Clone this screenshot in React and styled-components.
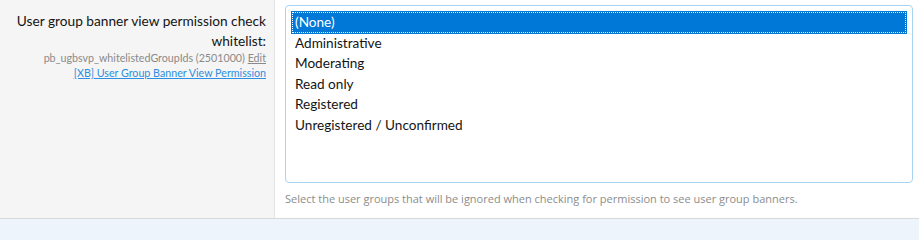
import React from 'react';
import styled, { createGlobalStyle } from 'styled-components';

const GlobalStyle = createGlobalStyle`
  html, body {
    margin: 0;
    padding: 0;
    background: #edf4fb;
    font-family: Lato, "Open Sans", sans-serif;
  }
`;

const FormRow = styled.div`
  display: flex;
  height: 219px;
  box-sizing: border-box;
  border-bottom: 1px solid #d8d8d8;
  background: #fff;
`;

const LabelCol = styled.div`
  width: 275px;
  flex: none;
  box-sizing: border-box;
  background: #f5f5f5;
  border-right: 1px solid #e3e3e3;
  padding: 11px 8px 0 6px;
  text-align: right;
`;

const Label = styled.div`
  font-size: 13.7px;
  line-height: 20px;
  color: #141414;
`;

const Hint = styled.div`
  font-size: 10.7px;
  line-height: 15px;
  color: #8a8a8a;
  margin-top: ${p => p.first ? '-1px' : '0'};
`;

const HintLink = styled.a`
  color: ${p => p.blue ? '#2d8fe0' : '#8a8a8a'};
  text-decoration: underline;
`;

const InputCol = styled.div`
  flex: 1;
  padding: 5px 6px 0 10px;
  min-width: 0;
`;

const ListBox = styled.ul`
  list-style: none;
  margin: 0;
  height: 178px;
  box-sizing: border-box;
  border: 1px solid #a9d4f1;
  border-radius: 4px;
  padding: 6px 6px;
  background: #fff;
`;

const Option = styled.li`
  height: 20.6px;
  line-height: 20px;
  padding-left: 3px;
  font-size: 13.6px;
  color: ${p => p.selected ? '#fff' : '#141414'};
  background: ${p => p.selected ? '#0078d7' : 'transparent'};
  outline: ${p => p.selected ? '1px dotted #fff' : 'none'};
  outline-offset: -1px;
  box-shadow: ${p => p.selected ? '0 0 0 1px #0078d7' : 'none'};
  white-space: nowrap;
`;

const Explain = styled.div`
  margin-top: 8px;
  font-family: "Open Sans", "Noto Sans", sans-serif;
  font-size: 11px;
  line-height: 15px;
  color: #8c8c8c;
`;

const groups = [
  '(None)',
  'Administrative',
  'Moderating',
  'Read only',
  'Registered',
  'Unregistered / Unconfirmed',
];

export default function App() {
  return (
    <>
      <GlobalStyle />
      <FormRow>
        <LabelCol>
          <Label>User group banner view permission check whitelist:</Label>
          <Hint first>
            pb_ugbsvp_whitelistedGroupIds (2501000) <HintLink>Edit</HintLink>
          </Hint>
          <Hint>
            <HintLink blue>[XB] User Group Banner View Permission</HintLink>
          </Hint>
        </LabelCol>
        <InputCol>
          <ListBox>
            {groups.map((g, i) => (
              <Option key={g} selected={i === 0}>{g}</Option>
            ))}
          </ListBox>
          <Explain>
            Select the user groups that will be ignored when checking for permission to see user group banners.
          </Explain>
        </InputCol>
      </FormRow>
    </>
  );
}
